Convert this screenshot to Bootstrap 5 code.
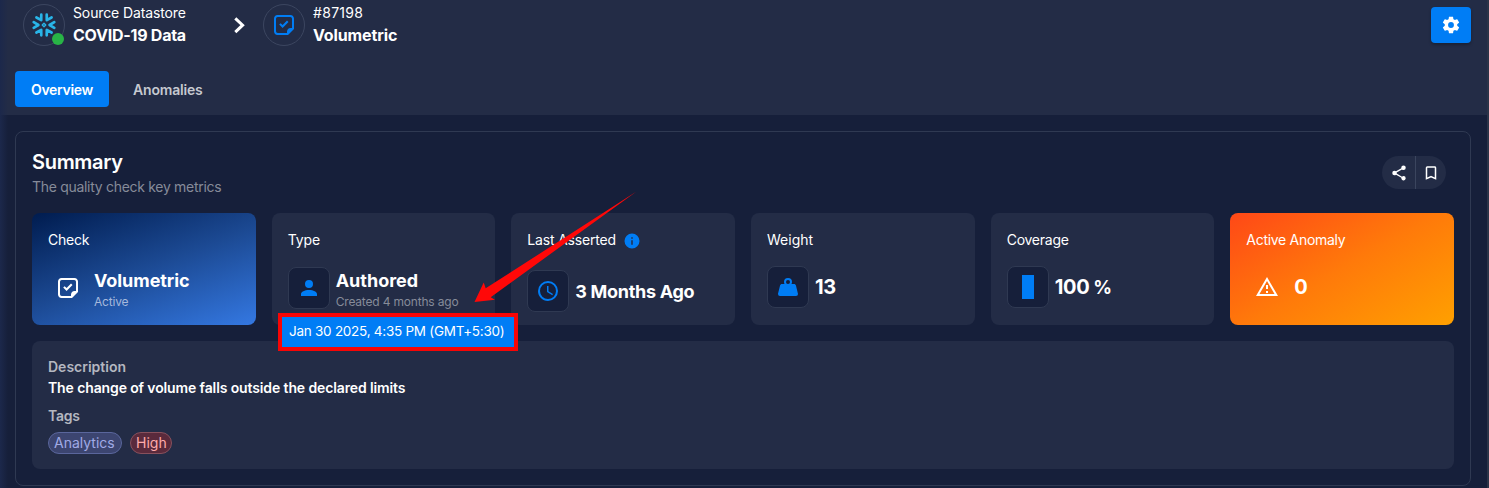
<!DOCTYPE html>
<html lang="en" data-bs-theme="dark">
<head>
<meta charset="utf-8">
<title>Volumetric check</title>
<link href="https://cdn.jsdelivr.net/npm/bootstrap@5.3.0/dist/css/bootstrap.min.css" rel="stylesheet">
<script src="https://cdn.jsdelivr.net/npm/bootstrap@5.3.0/dist/js/bootstrap.bundle.min.js"></script>
<style>
:root{--surface:#232c46;--ground:#161f3a;--line:#2f3952;--azure:#007df5}
body{font-family:Inter,"Open Sans",sans-serif;font-size:14px;line-height:20px;color:#fff;background:var(--ground);height:488px;overflow:hidden}
.page{height:488px;border-right:2px solid #2b3448;position:relative;overflow:hidden}
.page::before{content:"";position:absolute;inset:0 auto 0 0;width:8px;background:linear-gradient(90deg,#1c284b,#1c284b00);z-index:2}
svg{display:block;fill:currentColor;flex:none}

/* type scale */
.txt{white-space:nowrap;display:block}
.t12{font-size:12px;line-height:16px}
.t14{font-size:14px;line-height:20px}
.t16{font-size:16px;line-height:24px;font-weight:700}
.t18{font-size:18px;line-height:26px;font-weight:700}
.t20{font-size:20px;line-height:28px;font-weight:700}
.lh-22{line-height:22px}
.ls-wide{letter-spacing:.3px}
.ls-05{letter-spacing:-.05px}
.ls-10{letter-spacing:-.12px}
.ls-15{letter-spacing:-.18px}
.ls-20{letter-spacing:-.25px}
.ls-25{letter-spacing:-.3px}
.ls-30{letter-spacing:-.3px}
.azure{color:var(--azure)}
.dim{color:#868b99}
.soft{color:#b4b7c0}
.pale{color:#a6b9dc}

/* header */
.topbar{background:var(--surface);height:115px}
.crumbs{height:50px;padding-left:23px}
.crumb-name{width:114px}
.chev{margin:0 12px 0 40px}
.ring{width:42px;height:42px;border:1px solid #3c4660;border-radius:50%;position:relative}
.status-dot{position:absolute;width:12px;height:12px;right:0;bottom:0;border-radius:50%;background:#28b446}
.btn-azure,.btn-azure:hover{background:var(--azure);border:0;color:#fff;border-radius:4px}
.gear{width:40px;height:36px;margin:7px 16px 0 0;box-shadow:0 2px 3px #0004}
.tabs{margin:21px 0 0 15px}
.tab-btn{height:36px;width:94px;border-radius:4px;font-weight:600;padding:2px 0 0 16px;text-align:left}
.tab-btn.soft{color:#c6c9d0;border:0}

/* summary panel */
.panel{margin:16px 16px 0 15px;height:355px;border:1px solid var(--line);border-radius:8px;padding:16px 16px 0}
.panel-head{height:65px}
.pill{height:33px;border-radius:17px;background:var(--surface);margin:8px 8px 0 0}
.pill-a{width:34px;border-right:1px solid #3b455e}
.pill-b{width:30px}
.metrics{display:grid;grid-template-columns:repeat(6,1fr);gap:16px}
.metric{height:112px;background:var(--surface);border-radius:8px;padding:17px 16px;min-width:0}
.metric-check{background:linear-gradient(160deg,#001c4f 0%,#1c4a94 50%,#3478e2 100%)}
.metric-alert{background:linear-gradient(150deg,#ff4817 0%,#ff7a0a 50%,#ffa000 100%)}
.figure-row{display:flex;align-items:center;gap:6px;margin-top:16px}
.figure-row.two-line{margin-top:17px;align-items:flex-start}
.figure-row.with-info{margin-top:20px}
.two-line>div:last-child{padding-top:1px}
.with-info .t18{padding-top:1px}
.tile{width:42px;height:42px;border:1px solid var(--line);border-radius:8px;background:var(--ground);flex:none;display:flex;align-items:center;justify-content:center}
.tile-clear{background:none;border-color:transparent;width:40px}
.metric-alert .tile-clear{width:42px}
.info-dot{margin:2px 0 0 7px}
.label-row{height:20px}
.bar-full{width:12px;height:24px;background:var(--azure)}
.percent{padding-left:4px;line-height:28px;font-size:18.5px}
.details{height:128px;background:var(--surface);border-radius:8px;padding:16px}
.tags-label{margin-top:7px}
.tag-row{margin-top:6px}
.chip{height:22px;border-radius:11px;border:1px solid;padding:0 5px}
.chip-a{background:#3c4570;border-color:#5a669c;color:#a0aae6;width:74px}
.chip-h{background:#5a2a3c;border-color:#88505c;color:#ffaaaa;width:42px}
.tip{position:absolute;left:278px;top:313px;width:240px;height:38px;border:4px solid #f80505;background:var(--azure);z-index:3;padding:4px 0 0 7px}
.tip .txt{font-size:13.5px;letter-spacing:-.26px}
.pointer-arrow{position:absolute;left:470px;top:185px;z-index:4}
</style>
</head>
<body>
<svg class="d-none">
<symbol id="note" viewBox="0 0 24 24"><path fill-rule="evenodd" d="M5.5 2C3.56 2 2 3.56 2 5.5V18.5C2 20.44 3.56 22 5.5 22H16L22 16V5.5C22 3.56 20.44 2 18.5 2H5.5M5.75 4H18.25A1.75 1.75 0 0 1 20 5.75V15H18.5C16.56 15 15 16.56 15 18.5V20H5.75A1.75 1.75 0 0 1 4 18.25V5.75A1.75 1.75 0 0 1 5.75 4Z"/><path d="M15 7.4 16.5 8.9 10.6 14.9 7.2 11.6 8.6 10.2 10.6 12.1Z"/></symbol>
</svg>
<div class="page">
<header class="topbar">
 <div class="d-flex justify-content-between">
  <div class="crumbs d-flex align-items-center">
   <div class="ring d-flex align-items-center justify-content-center">
    <svg width="26" height="26" viewBox="-13 -13 26 26"><g fill="none" stroke="#29b5e8" stroke-width="2.7" stroke-linecap="round" stroke-linejoin="round"><path stroke-width="1.3" d="M0-1.8 1.8 0 0 1.8-1.8 0Z"/><path id="arm" d="M10.3-2.8 5.6 0 10.3 2.8"/><use href="#arm" transform="rotate(60)"/><use href="#arm" transform="rotate(120)"/><use href="#arm" transform="rotate(180)"/><use href="#arm" transform="rotate(240)"/><use href="#arm" transform="rotate(300)"/></g></svg>
    <span class="status-dot"></span>
   </div>
   <div class="crumb-name ms-2"><span class="txt t14 ls-10">Source Datastore</span><span class="txt t16 ls-20">COVID-19 Data</span></div>
   <svg class="chev" width="24" height="24" viewBox="0 0 24 24"><path fill="none" stroke="#fff" stroke-width="3" d="M8.3 5.3 15.6 12.2 8.3 19.1"/></svg>
   <div class="ring d-flex align-items-center justify-content-center azure"><svg width="24" height="24"><use href="#note"/></svg></div>
   <div class="ms-2"><span class="txt t14 ls-wide">#87198</span><span class="txt t16 ls-10">Volumetric</span></div>
  </div>
  <button class="btn btn-azure gear d-flex align-items-center justify-content-center p-0"><svg width="20" height="20" viewBox="0 0 24 24"><path d="M12,15.5A3.5,3.5 0 0,1 8.5,12A3.5,3.5 0 0,1 12,8.5A3.5,3.5 0 0,1 15.5,12A3.5,3.5 0 0,1 12,15.5M19.43,12.97C19.47,12.65 19.5,12.33 19.5,12C19.5,11.67 19.47,11.34 19.43,11L21.54,9.37C21.73,9.22 21.78,8.95 21.66,8.73L19.66,5.27C19.54,5.05 19.27,4.96 19.05,5.05L16.56,6.05C16.04,5.66 15.5,5.32 14.87,5.07L14.5,2.42C14.46,2.18 14.25,2 14,2H10C9.75,2 9.54,2.18 9.5,2.42L9.13,5.07C8.5,5.32 7.96,5.66 7.44,6.05L4.95,5.05C4.73,4.96 4.46,5.05 4.34,5.27L2.34,8.73C2.21,8.95 2.27,9.22 2.46,9.37L4.57,11C4.53,11.34 4.5,11.67 4.5,12C4.5,12.33 4.53,12.65 4.57,12.97L2.46,14.63C2.27,14.78 2.21,15.05 2.34,15.27L4.34,18.73C4.46,18.95 4.73,19.03 4.95,18.95L7.44,17.94C7.96,18.34 8.5,18.68 9.13,18.93L9.5,21.58C9.54,21.82 9.75,22 10,22H14C14.25,22 14.46,21.82 14.5,21.58L14.87,18.93C15.5,18.67 16.04,18.34 16.56,17.94L19.05,18.95C19.27,19.03 19.54,18.95 19.66,18.73L21.66,15.27C21.78,15.05 21.73,14.78 21.54,14.63L19.43,12.97Z"/></svg></button>
 </div>
 <nav class="tabs d-flex gap-2">
  <button class="btn btn-azure tab-btn"><span class="txt t14 ls-30">Overview</span></button>
  <button class="btn tab-btn soft"><span class="txt t14 ls-15">Anomalies</span></button>
 </nav>
</header>
<main class="panel">
 <div class="panel-head d-flex justify-content-between">
  <div><span class="txt t20 fw-semibold ls-25">Summary</span><span class="txt t14 lh-22 dim ls-30">The quality check key metrics</span></div>
  <div class="pill d-flex">
   <div class="pill-a d-flex align-items-center justify-content-center"><svg width="18" height="18" viewBox="0 0 24 24"><path d="M18,16.08C17.24,16.08 16.56,16.38 16.04,16.85L8.91,12.7C8.96,12.47 9,12.24 9,12C9,11.76 8.96,11.53 8.91,11.3L15.96,7.19C16.5,7.69 17.21,8 18,8A3,3 0 0,0 21,5A3,3 0 0,0 18,2A3,3 0 0,0 15,5C15,5.24 15.04,5.47 15.09,5.7L8.04,9.81C7.5,9.31 6.79,9 6,9A3,3 0 0,0 3,12A3,3 0 0,0 6,15C6.79,15 7.5,14.69 8.04,14.19L15.16,18.34C15.11,18.55 15.08,18.77 15.08,19C15.08,20.61 16.39,21.91 18,21.91C19.61,21.91 20.92,20.61 20.92,19A2.92,2.92 0 0,0 18,16.08Z"/></svg></div>
   <div class="pill-b d-flex align-items-center justify-content-center"><svg width="18" height="18" viewBox="0 0 24 24"><path d="M17,18L12,15.82L7,18V5H17M17,3H7A2,2 0 0,0 5,5V21L12,18L19,21V5C19,3.89 18.1,3 17,3Z"/></svg></div>
  </div>
 </div>
 <section class="metrics">
  <div class="metric metric-check"><span class="txt t14 ls-20">Check</span>
   <div class="figure-row two-line"><div class="tile tile-clear"><svg width="24" height="24"><use href="#note"/></svg></div><div><span class="txt t18 ls-05">Volumetric</span><span class="txt t12 pale ls-15">Active</span></div></div></div>
  <div class="metric"><span class="txt t14 ls-10">Type</span>
   <div class="figure-row two-line"><div class="tile azure"><svg width="24" height="24" viewBox="0 0 24 24"><path d="M12,4A4,4 0 0,1 16,8A4,4 0 0,1 12,12A4,4 0 0,1 8,8A4,4 0 0,1 12,4M12,14C16.42,14 20,15.79 20,18V20H4V18C4,15.79 7.58,14 12,14Z"/></svg></div><div><span class="txt t18">Authored</span><span class="txt t12 dim ls-15">Created 4 months ago</span></div></div></div>
  <div class="metric"><div class="label-row d-flex"><span class="txt t14 ls-15">Last Asserted</span><svg class="info-dot azure" width="18" height="18" viewBox="0 0 24 24"><path d="M13,9H11V7H13M13,17H11V11H13M12,2A10,10 0 0,0 2,12A10,10 0 0,0 12,22A10,10 0 0,0 22,12A10,10 0 0,0 12,2Z"/></svg></div>
   <div class="figure-row with-info"><div class="tile azure"><svg width="24" height="24" viewBox="0 0 24 24"><path d="M12,20A8,8 0 0,0 20,12A8,8 0 0,0 12,4A8,8 0 0,0 4,12A8,8 0 0,0 12,20M12,2A10,10 0 0,1 22,12A10,10 0 0,1 12,22C6.47,22 2,17.5 2,12A10,10 0 0,1 12,2M12.5,7V12.25L17,14.92L16.25,16.15L11,13V7H12.5Z"/></svg></div><span class="txt t18 ls-30">3 Months Ago</span></div></div>
  <div class="metric"><span class="txt t14">Weight</span>
   <div class="figure-row"><div class="tile azure"><svg width="24" height="24" viewBox="0 0 24 24"><path d="M12,3A4,4 0 0,1 16,7C16,7.73 15.81,8.41 15.46,9H18C18.95,9 19.75,9.67 19.95,10.56C21.96,18.57 22,18.78 22,19A2,2 0 0,1 20,21H4A2,2 0 0,1 2,19C2,18.78 2.04,18.57 4.05,10.56C4.25,9.67 5.05,9 6,9H8.54C8.19,8.41 8,7.73 8,7A4,4 0 0,1 12,3M12,5A2,2 0 0,0 10,7A2,2 0 0,0 12,9A2,2 0 0,0 14,7A2,2 0 0,0 12,5Z"/></svg></div><span class="txt t20 ls-30">13</span></div></div>
  <div class="metric"><span class="txt t14 ls-20">Coverage</span>
   <div class="figure-row"><div class="tile"><span class="bar-full"></span></div><div class="d-flex"><span class="txt t20 ls-30">100</span><span class="txt t18 percent">%</span></div></div></div>
  <div class="metric metric-alert"><span class="txt t14 ls-25">Active Anomaly</span>
   <div class="figure-row"><div class="tile tile-clear"><svg width="24" height="24" viewBox="0 0 24 24"><path d="M12,2L1,21H23M12,6L19.53,19H4.47M11,10V14H13V10M11,16V18H13V16"/></svg></div><span class="txt t20">0</span></div></div>
 </section>
 <section class="details mt-3">
  <span class="txt t14 fw-semibold soft">Description</span>
  <span class="txt t14 lh-22 fw-semibold ls-10">The change of volume falls outside the declared limits</span>
  <span class="txt t14 fw-semibold soft ls-20 tags-label">Tags</span>
  <div class="tag-row d-flex gap-2"><span class="chip chip-a">Analytics</span><span class="chip chip-h">High</span></div>
 </section>
</main>
<div class="tip"><span class="txt t14">Jan 30 2025, 4:35 PM (GMT+5:30)</span></div>
<svg class="pointer-arrow" width="170" height="125" viewBox="470 185 170 125"><path fill="#ff0808" d="M636.5 191.5 485.7 288.3 483.7 282.5 474.5 302 495 299.7 490.7 297.3Z"/></svg>
</div>
</body>
</html>
